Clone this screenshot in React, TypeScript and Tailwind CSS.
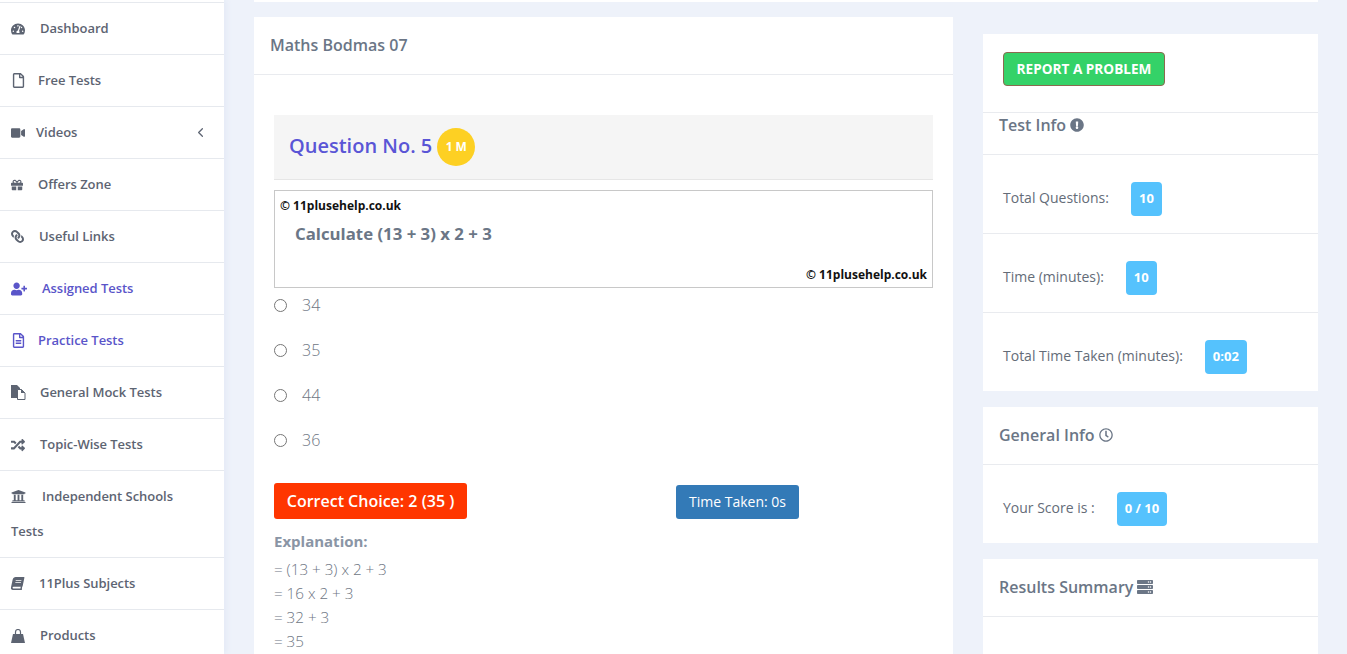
import type { ReactNode } from "react";
import {
  FaBook,
  FaExclamationCircle,
  FaGift,
  FaLink,
  FaRandom,
  FaRegClock,
  FaRegFile,
  FaRegFileAlt,
  FaServer,
  FaTachometerAlt,
  FaUniversity,
  FaUserPlus,
  FaVideo,
} from "react-icons/fa";
import { LuChevronLeft } from "react-icons/lu";

function FilesIcon() {
  return (
    <svg width="15" height="15" viewBox="0 0 15 15">
      <path d="M0 0h6l3 3v10H0z" fill="currentColor" />
      <path d="M6.5 4.5h4l3.5 3.5v6.5H6.5z" fill="#fff" stroke="currentColor" />
      <path d="M10 4v4h4z" fill="currentColor" />
    </svg>
  );
}

function BagIcon() {
  return (
    <svg width="14" height="14" viewBox="0 0 14 14">
      <path d="M2 5h10l2 9H0z" fill="currentColor" />
      <path d="M4.5 6V3a2.5 2.5 0 0 1 5 0v3" fill="none" stroke="currentColor" strokeWidth="1.2" />
    </svg>
  );
}

const NAV = [
  { label: "Dashboard", icon: <FaTachometerAlt size={14} />, text: "ml-[14px]" },
  { label: "Free Tests", icon: <FaRegFile size={15} />, text: "ml-[12px]" },
  { label: "Videos", icon: <FaVideo size={14} />, text: "ml-[10px]" },
  { label: "Offers Zone", icon: <FaGift size={12} />, text: "ml-[12px]" },
  { label: "Useful Links", icon: <FaLink size={13} className="-scale-x-100" />, text: "ml-[13px]" },
  { label: "Assigned Tests", icon: <FaUserPlus size={16} />, text: "ml-[16px]", active: true },
  { label: "Practice Tests", icon: <FaRegFileAlt size={15} />, text: "ml-[12px]", active: true },
  { label: "General Mock Tests", icon: <FilesIcon />, text: "ml-[14px]" },
  { label: "Topic-Wise Tests", icon: <FaRandom size={14} />, text: "ml-[14px]" },
  { label: "Independent Schools", icon: <FaUniversity size={15} />, text: "ml-[16px]", wrap: "Tests" },
  { label: "11Plus Subjects", icon: <FaBook size={13} className="-skew-x-12" />, text: "ml-[13px]" },
  { label: "Products", icon: <BagIcon />, text: "ml-[14px]" },
];

function Sidebar() {
  return (
    <aside className="w-[224px] shrink-0 bg-white text-[13px] font-semibold tracking-[-0.04px] text-[#5d6472] shadow-[2px_0_6px_#e3e9f5]">
      <div className="h-[3px] border-b border-[#e6e9ee]" />
      {NAV.map((item) => (
        <div
          key={item.label}
          className={`border-b border-[#e6e9ee] px-[11px] ${item.active ? "text-[#5a55c9]" : ""}`}
        >
          <div className="flex h-[51px] items-center">
            <span className="w-[15px] shrink-0">{item.icon}</span>
            <span className={item.text}>{item.label}</span>
            {item.label === "Videos" && (
              <LuChevronLeft size={15} className="ml-auto mr-[5px]" />
            )}
          </div>
          {item.wrap && <div className="-mt-[3px] h-[38px] leading-[24px]">{item.wrap}</div>}
        </div>
      ))}
    </aside>
  );
}

function CardHeader({ children }: { children: ReactNode }) {
  return (
    <div className="flex h-[58px] items-center gap-[4px] border-b border-[#e9ebef] pb-[2px] pl-[16px] text-[16px] font-semibold text-[#6b7686]">
      {children}
    </div>
  );
}

function InfoRow({ label, value, last }: { label: string; value: string; last?: boolean }) {
  return (
    <div className={`flex items-center pl-[20px] pt-[10px] ${last ? "h-[78px]" : "h-[79px] border-b border-[#e9ebef]"}`}>
      <span className="-mt-[4px] text-[14px] text-[#646c78]">{label}</span>
      <span className="ml-[22px] flex h-[34px] items-center rounded-[4px] bg-[#55c2fd] px-[8px] text-[13px] font-bold text-white">
        {value}
      </span>
    </div>
  );
}

function Option({ value }: { value: string }) {
  return (
    <label className="flex h-[45px] items-center text-[16px] font-light text-[#6e7683]">
      <span className="h-[13px] w-[13px] rounded-full border border-[#767676] bg-white" />
      <span className="-mt-[2px] ml-[15px]">{value}</span>
    </label>
  );
}

export default function App() {
  return (
    <div className="flex h-[654px] overflow-hidden bg-[#eef2fa] font-['Open_Sans',sans-serif]">
      <Sidebar />
      <main className="min-w-0 flex-1 pl-[30px] pr-[29px]">
        <div className="h-[2px] bg-white" />
        <div className="flex items-start gap-[30px] pt-[15px]">
          <section className="w-[699px] shrink-0 bg-white">
            <div className="flex h-[58px] items-center border-b border-[#e9ebef] px-[16px] pb-[2px] text-[16px] font-semibold text-[#6b7686]">
              Maths Bodmas 07
            </div>
            <div className="px-[20px] pt-[40px]">
              <div className="flex h-[65px] items-center gap-[5px] border-b border-[#e6e6e6] bg-[#f5f5f5] px-[15px]">
                <span className="-mt-[2px] text-[20px] font-semibold text-[#5a55d6]">Question No. 5</span>
                <span className="flex h-[38px] w-[38px] items-center justify-center rounded-full bg-[#fdd023] text-[12px] font-bold text-white">
                  1 M
                </span>
              </div>
              <div className="mt-[10px] flex h-[98px] flex-col border border-[#c8c8c8] px-[5px]">
                <div className="pt-[6px] text-[12px] font-bold leading-[17px] text-[#111]">© 11plusehelp.co.uk</div>
                <div className="ml-[15px] mt-[8px] text-[16.8px] font-bold leading-[24px] text-[#6b7686]">
                  Calculate (13 + 3) x 2 + 3
                </div>
                <div className="mt-auto pb-[4px] text-right text-[12px] font-bold leading-[17px] text-[#111]">
                  © 11plusehelp.co.uk
                </div>
              </div>
              <div className="-mt-[5px]">
                <Option value="34" />
                <Option value="35" />
                <Option value="44" />
                <Option value="36" />
              </div>
              <div className="mt-[20px] flex items-end">
                <span className="flex h-[36px] w-[193px] items-center justify-center rounded-[3px] bg-[#ff3600] text-[16px] font-semibold text-white">
                  Correct Choice: 2 (35 )
                </span>
                <span className="ml-[209px] flex h-[34px] w-[123px] items-center justify-center rounded-[3px] bg-[#337ab7] pb-[2px] text-[14px] text-white">
                  Time Taken: 0s
                </span>
              </div>
              <div className="mt-[12px] text-[15px] font-bold leading-[20px] text-[#8a95a5]">Explanation:</div>
              <div className="mt-[6px] text-[15.2px] font-light leading-[24px] text-[#6e7683]">
                <div>= (13 + 3) x 2 + 3</div>
                <div>= 16 x 2 + 3</div>
                <div>= 32 + 3</div>
                <div>= 35</div>
              </div>
              <div className="h-[40px]" />
            </div>
          </section>

          <div className="mt-[17px] flex w-[335px] shrink-0 flex-col gap-[16px]">
            <section className="bg-white">
              <div className="flex h-[79px] items-start border-b border-[#e9ebef] pl-[20px] pt-[18px]">
                <button className="flex h-[34px] w-[162px] items-center justify-center rounded-[4px] border border-[#8a6a4f] bg-[#34d268] text-[13.6px] font-bold text-white">
                  REPORT A PROBLEM
                </button>
              </div>
              <div className="flex h-[42px] items-start gap-[4px] border-b border-[#e9ebef] pl-[16px] text-[16px] font-semibold leading-[24px] text-[#6b7686]">
                Test Info <FaExclamationCircle size={14} className="mt-[5px]" />
              </div>
              <InfoRow label="Total Questions:" value="10" />
              <InfoRow label="Time (minutes):" value="10" />
              <InfoRow label="Total Time Taken (minutes):" value="0:02" last />
            </section>

            <section className="bg-white">
              <CardHeader>
                General Info <FaRegClock size={14} />
              </CardHeader>
              <InfoRow label="Your Score is :" value="0 / 10" last />
            </section>

            <section className="h-[200px] bg-white">
              <CardHeader>
                Results Summary <FaServer size={16} />
              </CardHeader>
            </section>
          </div>
        </div>
      </main>
    </div>
  );
}
